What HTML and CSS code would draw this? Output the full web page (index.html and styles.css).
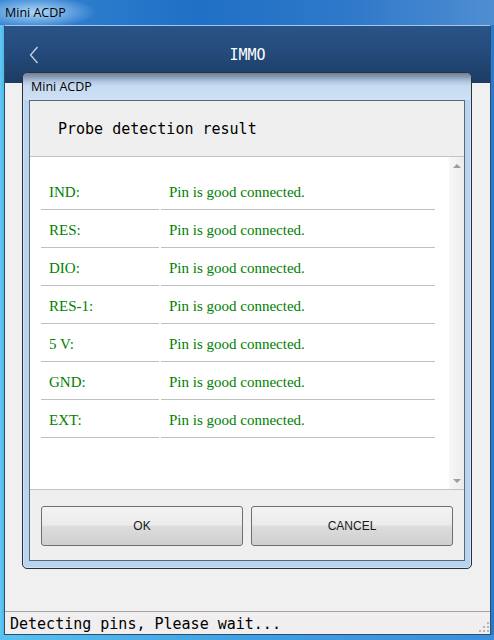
FILE: index.html
```html
<!DOCTYPE html>
<html>
<head>
<meta charset="utf-8">
<title>Mini ACDP</title>
<link rel="stylesheet" href="styles.css">
</head>
<body>
<div class="window">
  <div class="titlebar"><span class="wtitle">Mini ACDP</span></div>
  <div class="client">
    <div class="appbar">
      <svg class="back" width="10" height="18" viewBox="0 0 10 18"><polyline points="8.5,1 1.5,9 8.5,17" fill="none" stroke="#c9d2de" stroke-width="1.3"/></svg>
      <div class="apptitle">IMMO</div>
      <div></div>
    </div>
    <div class="appbody"></div>
    <div class="status">
      <span class="stext">Detecting pins, Please wait...</span>
      <svg class="grip" width="11" height="11" viewBox="0 0 11 11">
        <g fill="#b4b4b4">
          <rect x="8" y="0" width="2" height="2"/>
          <rect x="4" y="4" width="2" height="2"/><rect x="8" y="4" width="2" height="2"/>
          <rect x="0" y="8" width="2" height="2"/><rect x="4" y="8" width="2" height="2"/><rect x="8" y="8" width="2" height="2"/>
        </g>
      </svg>
    </div>
  </div>
  <div class="bottomframe"></div>

  <div class="dialog">
    <div class="dtitle">Mini ACDP</div>
    <div class="dclient">
      <div class="dhead">Probe detection result</div>
      <div class="dlistwrap">
        <div class="dlist">
          <div class="row"><div class="k">IND:</div><div class="v">Pin is good connected.</div></div>
          <div class="row"><div class="k">RES:</div><div class="v">Pin is good connected.</div></div>
          <div class="row"><div class="k">DIO:</div><div class="v">Pin is good connected.</div></div>
          <div class="row"><div class="k">RES-1:</div><div class="v">Pin is good connected.</div></div>
          <div class="row"><div class="k">5 V:</div><div class="v">Pin is good connected.</div></div>
          <div class="row"><div class="k">GND:</div><div class="v">Pin is good connected.</div></div>
          <div class="row"><div class="k">EXT:</div><div class="v">Pin is good connected.</div></div>
        </div>
        <div class="scrollbar">
          <svg width="8" height="4" viewBox="0 0 8 4"><polygon points="4,0 8,4 0,4" fill="#9c9c9c"/></svg>
          <svg width="8" height="4" viewBox="0 0 8 4"><polygon points="0,0 8,0 4,4" fill="#9c9c9c"/></svg>
        </div>
      </div>
      <div class="dbuttons">
        <button class="btn">OK</button>
        <button class="btn">CANCEL</button>
      </div>
    </div>
  </div>
</div>
</body>
</html>
```
FILE: styles.css
```css
* { box-sizing: border-box; }
html, body { margin: 0; padding: 0; }
body {
  width: 494px;
  height: 640px;
  overflow: hidden;
  font-family: "Liberation Sans", Arial, sans-serif;
  background: #2f7fd0;
}
.window {
  position: relative;
  width: 494px;
  height: 640px;
  display: flex;
  flex-direction: column;
  background: linear-gradient(to right, #62c9f1 0, #4cb8ec 4px, #2e7fd2 4px, #2a7acc 100%);
}
.titlebar {
  height: 25px;
  flex: none;
  display: flex;
  align-items: center;
  padding-left: 5px;
  background:
    radial-gradient(ellipse 60px 16px at 36px 12px, rgba(190,225,252,0.9), rgba(190,225,252,0) 100%),
    linear-gradient(to right, #3584d2 0, #1f70c6 40%, #2e78c9 70%, #4f8ed2 100%);
}
.wtitle {
  font-family: "Open Sans", "Noto Sans", sans-serif;
  font-size: 12.5px;
  color: #000;
}
.client {
  flex: 1;
  margin: 0 3px 0 4px;
  border: 1px solid #2e4c6c;
  border-top-color: #a4c6ea;
  background: #f0f0f0;
  display: flex;
  flex-direction: column;
}
.bottomframe {
  height: 5px;
  flex: none;
  background: linear-gradient(to right, #58c2ef, #3f9fe4 50%, #3a8fdc);
}
.appbar {
  height: 57px;
  flex: none;
  display: grid;
  grid-template-columns: 1fr auto 1fr;
  align-items: center;
  background: linear-gradient(to bottom, #2a5387 0, #234a7a 50%, #1c3b63 100%);
}
.back { margin-left: 24px; display: block; }
.apptitle {
  font-family: "DejaVu Sans Mono", monospace;
  font-size: 15px;
  color: #ffffff;
  padding-top: 1px;
}
.appbody { flex: 1; }
.status {
  height: 23px;
  flex: none;
  border-top: 1px solid #a3a3a3;
  background: #f0eeee;
  display: flex;
  align-items: center;
  justify-content: space-between;
  padding-left: 5px;
}
.stext {
  font-family: "DejaVu Sans Mono", monospace;
  font-size: 15px;
  color: #000;
  padding-top: 2px;
}
.grip { align-self: flex-end; margin: 0 0 1px 0; }

/* dialog (modal, lies over the app) */
.dialog {
  position: absolute;
  left: 22px;
  top: 72px;
  width: 450px;
  height: 497px;
  border: 1px solid #2c2f36;
  border-radius: 6px 6px 5px 5px;
  padding: 0 6px 7px 6px;
  display: flex;
  flex-direction: column;
  background: #b8d4f1;
  box-shadow: inset 0 0 0 1px rgba(255,255,255,0.35);
}
.dtitle {
  height: 27px;
  flex: none;
  margin: 0 -6px;
  padding-left: 8px;
  display: flex;
  align-items: center;
  font-family: "Open Sans", "Noto Sans", sans-serif;
  font-size: 12.5px;
  color: #000;
  border-radius: 5px 5px 0 0;
  background: linear-gradient(to bottom, #6d7f99 0, #8a9cb5 4px, #b4c9e2 9px, #c6dbf1 13px, #cde0f4 100%);
}
.dclient {
  flex: 1;
  border: 1px solid #5b6676;
  background: #efefef;
  display: flex;
  flex-direction: column;
}
.dhead {
  height: 56px;
  flex: none;
  border-bottom: 1px solid #c2c2c2;
  display: flex;
  align-items: center;
  padding-left: 28px;
  font-family: "DejaVu Sans Mono", monospace;
  font-size: 15px;
  color: #000;
}
.dlistwrap {
  height: 333px;
  flex: none;
  border-bottom: 1px solid #c2c2c2;
  display: flex;
  background: #fff;
}
.dlist {
  width: 419px;
  padding: 15px 0 0 11px;
  display: flex;
  flex-direction: column;
}
.row {
  display: flex;
  gap: 2px;
  height: 38px;
}
.k, .v {
  border-bottom: 1px solid #bfbfbf;
  display: flex;
  align-items: center;
  padding: 3px 0 0 8px;
  font-family: "Liberation Serif", "Times New Roman", serif;
  font-size: 15px;
  color: #008000;
}
.k { width: 118px; }
.v { width: 274px; }
.scrollbar {
  width: 15px;
  display: flex;
  flex-direction: column;
  align-items: center;
  justify-content: space-between;
  padding: 7px 0 6px 0;
  background: linear-gradient(to right, #f7f7f7, #ececec);
}
.scrollbar svg { display: block; }
.dbuttons {
  flex: 1;
  display: flex;
  gap: 8px;
  padding: 16px 0 0 11px;
}
.btn {
  width: 202px;
  height: 40px;
  border: 1px solid #6f6f6f;
  border-radius: 3px;
  background: linear-gradient(to bottom, #f3f3f3 0, #ebebeb 48%, #dddddd 50%, #cfcfcf 100%);
  font-family: "Liberation Sans", Arial, sans-serif;
  font-size: 12px;
  color: #1a1a1a;
  padding: 0;
}
```
